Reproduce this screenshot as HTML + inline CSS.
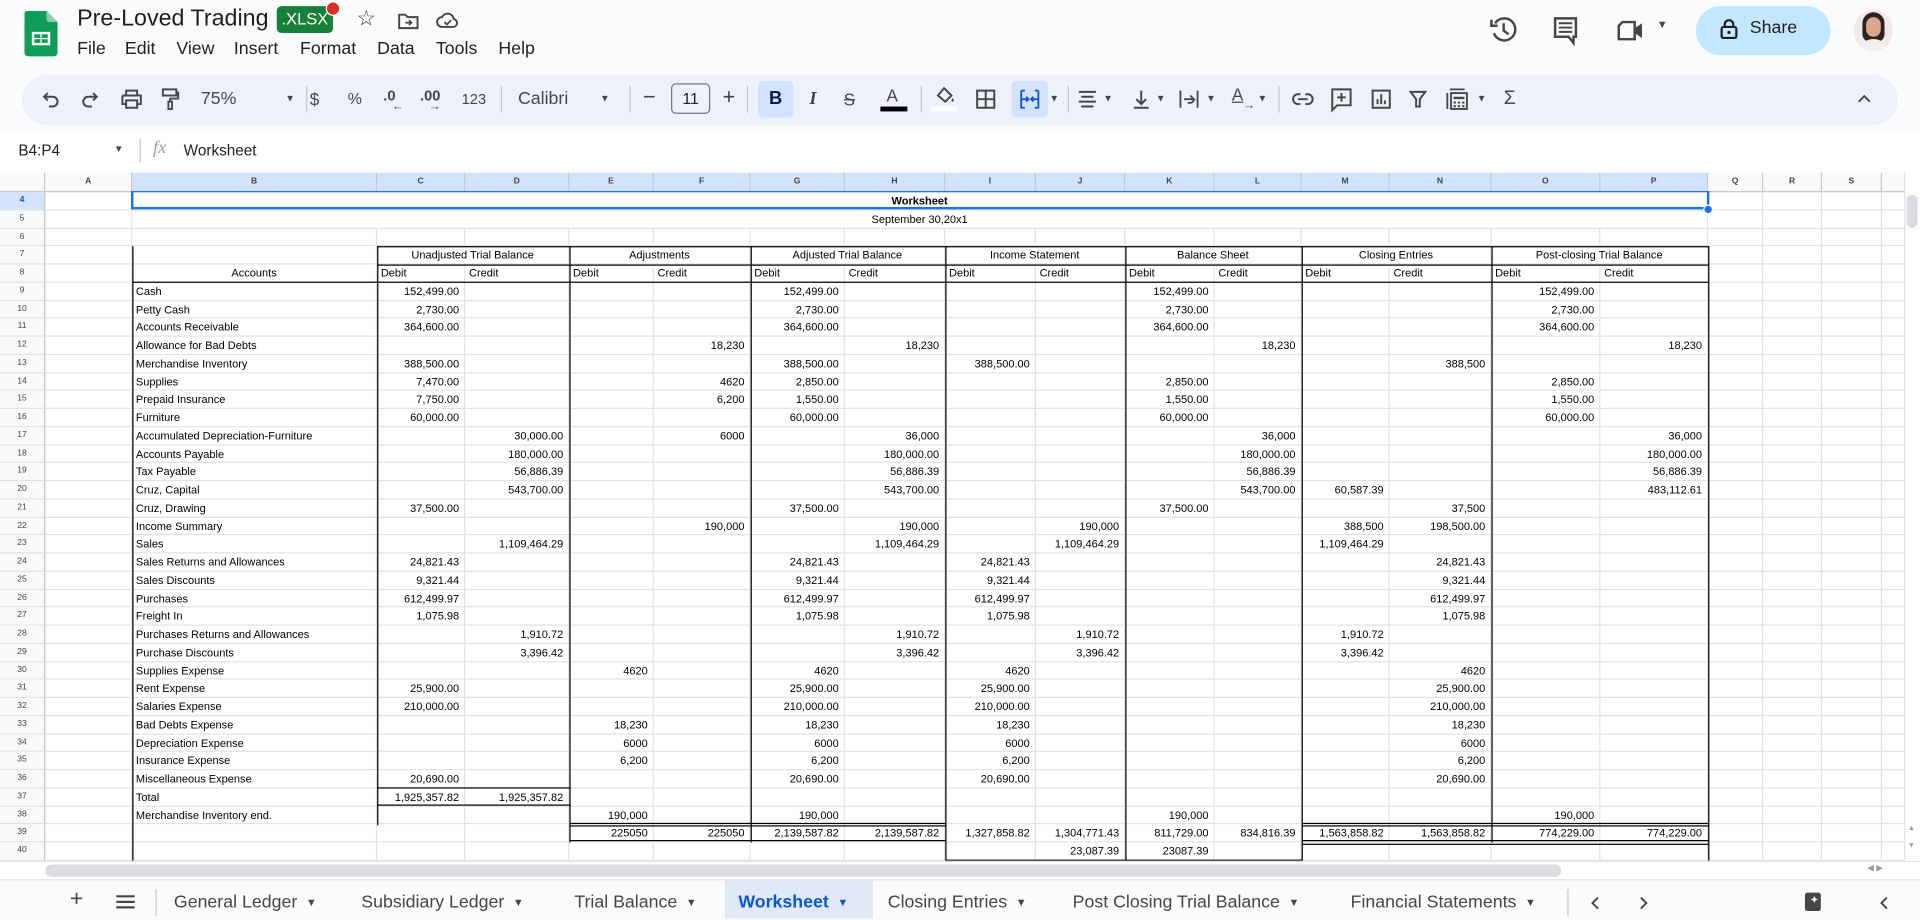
<!DOCTYPE html>
<html><head><meta charset="utf-8">
<style>
html,body{margin:0;padding:0;overflow:hidden;background:#f9fbfd;width:1920px;height:918px}
#w{position:absolute;left:0;top:0;width:1568px;height:750px;transform:scale(1.22449);transform-origin:0 0;font-family:"Liberation Sans",sans-serif;background:#f9fbfd;color:#1f1f1f}
.ab{position:absolute}
.menu span{position:absolute;top:32px;font-size:14.5px;color:#1f1f1f}
.tb{position:absolute;left:18px;top:61px;width:1532px;height:41px;background:#edf2fa;border-radius:21px}
.ti{position:absolute;top:71px;font-size:13px;color:#444746;line-height:20px}
.sep{position:absolute;top:70px;width:1px;height:22px;background:#c7c7c7}
.dd{position:absolute;top:72px;font-size:8px;color:#444746;line-height:18px}
svg{position:absolute;overflow:visible}
#g{position:absolute;left:0;top:141px;width:1556px;background:#fff}
.r{display:flex;height:14.75px;box-sizing:border-box}
.r c{display:block;flex:none;box-sizing:border-box;border-right:1px solid #e2e2e2;border-bottom:1px solid #e2e2e2;font-size:9px;line-height:14px;text-align:right;padding-right:4px;white-space:nowrap;overflow:visible;color:#000}
.r c:nth-child(1){width:37px;background:#f8f9fa;border-right:1px solid #c4c7c5;font-size:7px;color:#444;text-align:center;padding:0}
.r c:nth-child(2){width:71px}.r c:nth-child(3){width:200px;text-align:left;padding-left:3px}
.r c:nth-child(4){width:72px}.r c:nth-child(5){width:85px}.r c:nth-child(6){width:69px}.r c:nth-child(7){width:79px}
.r c:nth-child(8){width:77px}.r c:nth-child(9){width:82px}.r c:nth-child(10){width:74px}.r c:nth-child(11){width:73px}
.r c:nth-child(12){width:73px}.r c:nth-child(13){width:71px}.r c:nth-child(14){width:72px}.r c:nth-child(15){width:83px}
.r c:nth-child(16){width:89px}.r c:nth-child(17){width:88px}.r c:nth-child(18){width:45px}.r c:nth-child(19){width:48px}
.r c:nth-child(20){width:49px}.r c:nth-child(21){width:19px;border-right:none}
.hd{height:16px}
.hd c{background:#f8f9fa;border-bottom:1px solid #c4c7c5!important;border-right:1px solid #c4c7c5!important;font-size:7px!important;text-align:center!important;line-height:16px!important;padding:0!important;color:#444!important;font-weight:bold}
.hd c.s{background:#d3e3fd}
.L{text-align:left!important;padding-left:3px!important}
.C{text-align:center!important;padding:0!important}
.k{position:absolute;background:#000}
.tab{position:absolute;top:726px;font-size:14.5px;color:#444746;line-height:22px;white-space:nowrap}
.tab i{font-style:normal;font-size:9px;margin-left:7px;vertical-align:1px}
</style></head><body><div id="w">

<svg style="left:20px;top:9px" width="27" height="37" viewBox="0 0 27 37"><path d="M2 0h16l9 9v25a3 3 0 0 1-3 3H3a3 3 0 0 1-3-3V2a2 2 0 0 1 2-2z" fill="#0f9d58"/><path d="M18 0v7a2 2 0 0 0 2 2h7z" fill="#87ceac"/><rect x="6" y="17" width="15" height="11" fill="#fff"/><rect x="8" y="19" width="5" height="3" fill="#0f9d58"/><rect x="14" y="19" width="5" height="3" fill="#0f9d58"/><rect x="8" y="23" width="5" height="3" fill="#0f9d58"/><rect x="14" y="23" width="5" height="3" fill="#0f9d58"/></svg>
<div class="ab" style="left:63px;top:5px;font-size:19px;color:#1f1f1f">Pre-Loved Trading</div>
<div class="ab" style="left:226px;top:5px;width:46px;height:22px;background:#188038;border-radius:4px;color:#fff;font-size:13.5px;line-height:22px;text-align:center">.XLSX</div>
<div class="ab" style="left:266px;top:1px;width:10px;height:10px;border-radius:50%;background:#d93025;border:1px solid #fff"></div>
<div class="ab" style="left:291px;top:5px;font-size:18px;color:#444746">☆</div>
<svg style="left:325px;top:10px" width="17" height="14"><path d="M1 2h5l2 2h8v9H1z" fill="none" stroke="#444746" stroke-width="1.6"/><path d="M6 8.5h5M9 6.5l2 2-2 2" fill="none" stroke="#444746" stroke-width="1.4"/></svg>
<svg style="left:356px;top:9px" width="19" height="15"><path d="M5 13a4 4 0 0 1 0-8 5 5 0 0 1 9.5 1.5A3.3 3.3 0 0 1 14.5 13z" fill="none" stroke="#444746" stroke-width="1.6"/><path d="M7 9l2 2 3.5-3.5" fill="none" stroke="#444746" stroke-width="1.4"/></svg>
<div class="menu"><span style="left:63px">File</span><span style="left:102px">Edit</span><span style="left:144px">View</span><span style="left:191px">Insert</span><span style="left:245px">Format</span><span style="left:308px">Data</span><span style="left:356px">Tools</span><span style="left:407px">Help</span></div>

<svg style="left:1217px;top:13px" width="22" height="22"><path d="M4 6A9 9 0 1 1 3 14" fill="none" stroke="#444746" stroke-width="2"/><path d="M1 3v5h5" fill="none" stroke="#444746" stroke-width="2"/><path d="M11 6v6l4 3" fill="none" stroke="#444746" stroke-width="2"/></svg>
<svg style="left:1268px;top:14px" width="21" height="22"><path d="M2 1h17v15h-2v5l-4-5H2z" fill="none" stroke="#444746" stroke-width="2"/><path d="M5 5h11M5 8.5h11M5 12h11" stroke="#444746" stroke-width="1.6"/></svg>
<svg style="left:1321px;top:17px" width="22" height="16"><path d="M4 1h10v14H1V4z" fill="none" stroke="#444746" stroke-width="2"/><path d="M14 6l6-4v12l-6-4z" fill="#444746"/></svg>
<div class="ab" style="left:1353px;top:15px;font-size:9px;color:#444746">▼</div>
<div class="ab" style="left:1385px;top:5px;width:110px;height:40px;border-radius:20px;background:#c2e7ff"></div>
<svg style="left:1405px;top:15px" width="14" height="17"><rect x="1" y="7" width="12" height="9" rx="1.5" fill="none" stroke="#1f1f1f" stroke-width="1.8"/><path d="M3.5 7V5a3.5 3.5 0 0 1 7 0v2" fill="none" stroke="#1f1f1f" stroke-width="1.8"/><circle cx="7" cy="11.5" r="1.3" fill="#1f1f1f"/></svg>
<div class="ab" style="left:1429px;top:15px;font-size:14.5px;color:#1f1f1f">Share</div>
<div class="ab" style="left:1514px;top:8px;width:32px;height:34px;border-radius:50%;background:#f3e9e6;overflow:hidden"><div style="position:absolute;left:7px;top:2px;width:18px;height:24px;border-radius:9px 9px 6px 6px;background:#2a2220"></div><div style="position:absolute;left:10px;top:6px;width:12px;height:16px;border-radius:6px;background:#d9a58d"></div><div style="position:absolute;left:5px;top:24px;width:22px;height:12px;border-radius:10px 10px 0 0;background:#f5eeee"></div></div>

<div class="tb"></div>
<svg style="left:35px;top:74px" width="14" height="14"><path d="M4 2L1 5l3 3" fill="none" stroke="#444746" stroke-width="1.6"/><path d="M1 5h7a4 4 0 0 1 0 8H5" fill="none" stroke="#444746" stroke-width="1.6"/></svg>
<svg style="left:66px;top:74px" width="14" height="14"><path d="M10 2l3 3-3 3" fill="none" stroke="#444746" stroke-width="1.6"/><path d="M13 5H6a4 4 0 0 0 0 8h3" fill="none" stroke="#444746" stroke-width="1.6"/></svg>
<svg style="left:99px;top:73px" width="17" height="16"><path d="M4 1h9v4H4z" fill="none" stroke="#444746" stroke-width="1.6"/><path d="M1 5h15v7h-3M4 12H1V5" fill="none" stroke="#444746" stroke-width="1.6"/><path d="M4 9h9v6H4z" fill="none" stroke="#444746" stroke-width="1.6"/></svg>
<svg style="left:132px;top:72px" width="14" height="18"><rect x="1" y="1" width="11" height="5" fill="none" stroke="#444746" stroke-width="1.6"/><path d="M12 3.5h1.5v5H7v3" fill="none" stroke="#444746" stroke-width="1.6"/><rect x="5.5" y="11" width="3" height="6" fill="none" stroke="#444746" stroke-width="1.5"/></svg>
<div class="ti" style="left:164px;font-size:14.5px">75%</div><div class="dd" style="left:233px">▼</div>
<div class="sep" style="left:250px"></div>
<div class="ti" style="left:253px;font-size:14px">$</div>
<div class="ti" style="left:284px;font-size:13px">%</div>
<div class="ti" style="left:313px;font-size:12px;font-weight:bold;top:68px">.0</div><div class="ti" style="left:320px;top:78px;font-size:10px">←</div>
<div class="ti" style="left:343px;font-size:12px;font-weight:bold;top:68px">.00</div><div class="ti" style="left:350px;top:78px;font-size:10px">→</div>
<div class="ti" style="left:377px;font-size:12px">123</div>
<div class="sep" style="left:409px"></div>
<div class="ti" style="left:423px;font-size:14.5px">Calibri</div><div class="dd" style="left:490px">▼</div>
<div class="sep" style="left:514px"></div>
<div class="ti" style="left:525px;font-size:18px;top:69px">−</div>
<div class="ab" style="left:548px;top:68px;width:32px;height:25px;border:1px solid #747775;border-radius:4px;box-sizing:border-box;font-size:13px;text-align:center;line-height:23px;color:#1f1f1f">11</div>
<div class="ti" style="left:590px;font-size:18px;top:69px">+</div>
<div class="sep" style="left:610px"></div>
<div class="ab" style="left:619px;top:66px;width:29px;height:30px;background:#d3e3fd;border-radius:4px"></div>
<div class="ti" style="left:628px;font-size:15px;font-weight:bold;color:#041e49">B</div>
<div class="ti" style="left:661px;font-size:15px;font-style:italic;font-family:'Liberation Serif',serif;font-weight:bold">I</div>
<div class="ti" style="left:689px;font-size:14px;text-decoration:line-through">S</div>
<div class="ti" style="left:724px;font-size:14px;top:68px">A</div><div class="ab" style="left:719px;top:87px;width:22px;height:4px;background:#000"></div>
<div class="sep" style="left:752px"></div>
<svg style="left:763px;top:70px" width="18" height="16"><path d="M3 8l5-6 6 6-5 5z" fill="none" stroke="#444746" stroke-width="1.6"/><path d="M15 10c1 1.5 1.5 2.5 0 3s-1-1.5 0-3z" fill="#444746"/></svg><div class="ab" style="left:760px;top:87px;width:22px;height:4px;background:#fff"></div>
<svg style="left:797px;top:73px" width="16" height="16"><rect x="1" y="1" width="14" height="14" fill="none" stroke="#444746" stroke-width="1.6"/><path d="M8 1v14M1 8h14" stroke="#444746" stroke-width="1.6"/></svg>
<div class="ab" style="left:826px;top:66px;width:30px;height:30px;background:#d3e3fd;border-radius:4px"></div>
<svg style="left:833px;top:73px" width="16" height="16"><path d="M1 1h3M1 1v14h3M15 1h-3M15 1v14h-3M1 8h5M15 8h-5M5 6l2 2-2 2M11 6l-2 2 2 2" fill="none" stroke="#0b57d0" stroke-width="1.5"/></svg>
<div class="dd" style="left:857px">▼</div>
<div class="sep" style="left:872px"></div>
<svg style="left:880px;top:74px" width="16" height="14"><path d="M1 1h14M3 5h10M1 9h14M3 13h10" stroke="#444746" stroke-width="1.6"/></svg><div class="dd" style="left:901px">▼</div>
<svg style="left:925px;top:73px" width="14" height="16"><path d="M7 1v11M3 8l4 4 4-4M1 15h12" fill="none" stroke="#444746" stroke-width="1.6"/></svg><div class="dd" style="left:944px">▼</div>
<svg style="left:963px;top:73px" width="16" height="16"><path d="M1 1v14M15 1v14M4 8h8l-3-3M12 8a3 3 0 0 1-3 3H7" fill="none" stroke="#444746" stroke-width="1.5"/></svg><div class="dd" style="left:985px">▼</div>
<div class="ti" style="left:1006px;font-size:14px;top:67px;text-decoration:underline">A</div><div class="ti" style="left:1015px;font-size:10px;top:77px">→</div><div class="dd" style="left:1027px">▼</div>
<div class="sep" style="left:1044px"></div>
<svg style="left:1055px;top:76px" width="18" height="10"><path d="M7 1H5a4 4 0 0 0 0 8h2M11 1h2a4 4 0 0 1 0 8h-2M5 5h8" fill="none" stroke="#444746" stroke-width="1.6"/></svg>
<svg style="left:1087px;top:72px" width="17" height="18"><path d="M1 1h15v13H5l-4 4z" fill="none" stroke="#444746" stroke-width="1.6"/><path d="M8.5 4v7M5 7.5h7" stroke="#444746" stroke-width="1.6"/></svg>
<svg style="left:1120px;top:73px" width="16" height="16"><rect x="1" y="1" width="14" height="14" fill="none" stroke="#444746" stroke-width="1.6"/><path d="M5 12V8M8 12V4M11 12V9" stroke="#444746" stroke-width="1.6"/></svg>
<svg style="left:1151px;top:74px" width="14" height="14"><path d="M1 1h12L8.5 7v6h-3V7z" fill="none" stroke="#444746" stroke-width="1.6"/></svg>
<svg style="left:1181px;top:72px" width="18" height="18"><path d="M3 1h12M1 4v13M4 4h13v13H4z" fill="none" stroke="#444746" stroke-width="1.5"/><path d="M6 7h9v2H6zM6 11h2v1.5H6zM9.5 11h2v1.5h-2zM13 11h2v1.5h-2zM6 14h2v1.5H6zM9.5 14h2v1.5h-2zM13 14h2v1.5h-2z" fill="#444746"/></svg><div class="dd" style="left:1206px">▼</div>
<div class="ti" style="left:1228px;font-size:16px">Σ</div>
<svg style="left:1517px;top:77px" width="11" height="7"><path d="M1 6l4.5-4.5L10 6" fill="none" stroke="#444746" stroke-width="1.6"/></svg>

<div class="ab" style="left:0;top:106px;width:1568px;height:35px;background:#fff"></div>
<div class="ab" style="left:15px;top:116px;font-size:12.5px;color:#1f1f1f">B4:P4</div>
<div class="ab" style="left:93px;top:117px;font-size:8px;color:#444746">▼</div>
<div class="ab" style="left:114px;top:113px;width:1px;height:20px;background:#c7c7c7"></div>
<div class="ab" style="left:125px;top:113px;font-size:15px;font-style:italic;font-family:'Liberation Serif',serif;color:#9aa0a6">fx</div>
<div class="ab" style="left:150px;top:116px;font-size:12.5px;color:#1f1f1f">Worksheet</div>

<div id="g">
<div class="r hd"><c></c><c>A</c><c class="s">B</c><c class="s">C</c><c class="s">D</c><c class="s">E</c><c class="s">F</c><c class="s">G</c><c class="s">H</c><c class="s">I</c><c class="s">J</c><c class="s">K</c><c class="s">L</c><c class="s">M</c><c class="s">N</c><c class="s">O</c><c class="s">P</c><c>Q</c><c>R</c><c>S</c><c></c></div>
<div class="r"><c style="width:37px;background:#d3e3fd;font-weight:bold;color:#0b57d0">4</c><c style="width:71px"></c><c class="C" style="width:1287px;font-weight:bold">Worksheet</c><c style="width:45px"></c><c style="width:48px"></c><c style="width:49px"></c><c style="width:19px;border-right:none"></c></div>
<div class="r"><c style="width:37px">5</c><c style="width:71px"></c><c class="C" style="width:1287px">September 30,20x1</c><c style="width:45px"></c><c style="width:48px"></c><c style="width:49px"></c><c style="width:19px;border-right:none"></c></div>
<div class="r"><c>6</c><c></c><c></c><c></c><c></c><c></c><c></c><c></c><c></c><c></c><c></c><c></c><c></c><c></c><c></c><c></c><c></c><c></c><c></c><c></c><c></c></div>
<div class="r"><c style="width:37px">7</c><c style="width:71px"></c><c style="width:200px"></c><c class="C" style="width:157px">Unadjusted Trial Balance</c><c class="C" style="width:148px">Adjustments</c><c class="C" style="width:159px">Adjusted Trial Balance</c><c class="C" style="width:147px">Income Statement</c><c class="C" style="width:144px">Balance Sheet</c><c class="C" style="width:155px">Closing Entries</c><c class="C" style="width:177px">Post-closing Trial Balance</c><c style="width:45px"></c><c style="width:48px"></c><c style="width:49px"></c><c style="width:19px;border-right:none"></c></div>
<div class="r"><c>8</c><c></c><c class="C">Accounts</c><c class="L">Debit</c><c class="L">Credit</c><c class="L">Debit</c><c class="L">Credit</c><c class="L">Debit</c><c class="L">Credit</c><c class="L">Debit</c><c class="L">Credit</c><c class="L">Debit</c><c class="L">Credit</c><c class="L">Debit</c><c class="L">Credit</c><c class="L">Debit</c><c class="L">Credit</c><c></c><c></c><c></c><c></c></div>
<div class="r"><c>9</c><c></c><c>Cash</c><c>152,499.00</c><c></c><c></c><c></c><c>152,499.00</c><c></c><c></c><c></c><c>152,499.00</c><c></c><c></c><c></c><c>152,499.00</c><c></c><c></c><c></c><c></c><c></c></div>
<div class="r"><c>10</c><c></c><c>Petty Cash</c><c>2,730.00</c><c></c><c></c><c></c><c>2,730.00</c><c></c><c></c><c></c><c>2,730.00</c><c></c><c></c><c></c><c>2,730.00</c><c></c><c></c><c></c><c></c><c></c></div>
<div class="r"><c>11</c><c></c><c>Accounts Receivable</c><c>364,600.00</c><c></c><c></c><c></c><c>364,600.00</c><c></c><c></c><c></c><c>364,600.00</c><c></c><c></c><c></c><c>364,600.00</c><c></c><c></c><c></c><c></c><c></c></div>
<div class="r"><c>12</c><c></c><c>Allowance for Bad Debts</c><c></c><c></c><c></c><c>18,230</c><c></c><c>18,230</c><c></c><c></c><c></c><c>18,230</c><c></c><c></c><c></c><c>18,230</c><c></c><c></c><c></c><c></c></div>
<div class="r"><c>13</c><c></c><c>Merchandise Inventory</c><c>388,500.00</c><c></c><c></c><c></c><c>388,500.00</c><c></c><c>388,500.00</c><c></c><c></c><c></c><c></c><c>388,500</c><c></c><c></c><c></c><c></c><c></c><c></c></div>
<div class="r"><c>14</c><c></c><c>Supplies</c><c>7,470.00</c><c></c><c></c><c>4620</c><c>2,850.00</c><c></c><c></c><c></c><c>2,850.00</c><c></c><c></c><c></c><c>2,850.00</c><c></c><c></c><c></c><c></c><c></c></div>
<div class="r"><c>15</c><c></c><c>Prepaid Insurance</c><c>7,750.00</c><c></c><c></c><c>6,200</c><c>1,550.00</c><c></c><c></c><c></c><c>1,550.00</c><c></c><c></c><c></c><c>1,550.00</c><c></c><c></c><c></c><c></c><c></c></div>
<div class="r"><c>16</c><c></c><c>Furniture</c><c>60,000.00</c><c></c><c></c><c></c><c>60,000.00</c><c></c><c></c><c></c><c>60,000.00</c><c></c><c></c><c></c><c>60,000.00</c><c></c><c></c><c></c><c></c><c></c></div>
<div class="r"><c>17</c><c></c><c>Accumulated Depreciation-Furniture</c><c></c><c>30,000.00</c><c></c><c>6000</c><c></c><c>36,000</c><c></c><c></c><c></c><c>36,000</c><c></c><c></c><c></c><c>36,000</c><c></c><c></c><c></c><c></c></div>
<div class="r"><c>18</c><c></c><c>Accounts Payable</c><c></c><c>180,000.00</c><c></c><c></c><c></c><c>180,000.00</c><c></c><c></c><c></c><c>180,000.00</c><c></c><c></c><c></c><c>180,000.00</c><c></c><c></c><c></c><c></c></div>
<div class="r"><c>19</c><c></c><c>Tax Payable</c><c></c><c>56,886.39</c><c></c><c></c><c></c><c>56,886.39</c><c></c><c></c><c></c><c>56,886.39</c><c></c><c></c><c></c><c>56,886.39</c><c></c><c></c><c></c><c></c></div>
<div class="r"><c>20</c><c></c><c>Cruz, Capital</c><c></c><c>543,700.00</c><c></c><c></c><c></c><c>543,700.00</c><c></c><c></c><c></c><c>543,700.00</c><c>60,587.39</c><c></c><c></c><c>483,112.61</c><c></c><c></c><c></c><c></c></div>
<div class="r"><c>21</c><c></c><c>Cruz, Drawing</c><c>37,500.00</c><c></c><c></c><c></c><c>37,500.00</c><c></c><c></c><c></c><c>37,500.00</c><c></c><c></c><c>37,500</c><c></c><c></c><c></c><c></c><c></c><c></c></div>
<div class="r"><c>22</c><c></c><c>Income Summary</c><c></c><c></c><c></c><c>190,000</c><c></c><c>190,000</c><c></c><c>190,000</c><c></c><c></c><c>388,500</c><c>198,500.00</c><c></c><c></c><c></c><c></c><c></c><c></c></div>
<div class="r"><c>23</c><c></c><c>Sales</c><c></c><c>1,109,464.29</c><c></c><c></c><c></c><c>1,109,464.29</c><c></c><c>1,109,464.29</c><c></c><c></c><c>1,109,464.29</c><c></c><c></c><c></c><c></c><c></c><c></c><c></c></div>
<div class="r"><c>24</c><c></c><c>Sales Returns and Allowances</c><c>24,821.43</c><c></c><c></c><c></c><c>24,821.43</c><c></c><c>24,821.43</c><c></c><c></c><c></c><c></c><c>24,821.43</c><c></c><c></c><c></c><c></c><c></c><c></c></div>
<div class="r"><c>25</c><c></c><c>Sales Discounts</c><c>9,321.44</c><c></c><c></c><c></c><c>9,321.44</c><c></c><c>9,321.44</c><c></c><c></c><c></c><c></c><c>9,321.44</c><c></c><c></c><c></c><c></c><c></c><c></c></div>
<div class="r"><c>26</c><c></c><c>Purchases</c><c>612,499.97</c><c></c><c></c><c></c><c>612,499.97</c><c></c><c>612,499.97</c><c></c><c></c><c></c><c></c><c>612,499.97</c><c></c><c></c><c></c><c></c><c></c><c></c></div>
<div class="r"><c>27</c><c></c><c>Freight In</c><c>1,075.98</c><c></c><c></c><c></c><c>1,075.98</c><c></c><c>1,075.98</c><c></c><c></c><c></c><c></c><c>1,075.98</c><c></c><c></c><c></c><c></c><c></c><c></c></div>
<div class="r"><c>28</c><c></c><c>Purchases Returns and Allowances</c><c></c><c>1,910.72</c><c></c><c></c><c></c><c>1,910.72</c><c></c><c>1,910.72</c><c></c><c></c><c>1,910.72</c><c></c><c></c><c></c><c></c><c></c><c></c><c></c></div>
<div class="r"><c>29</c><c></c><c>Purchase Discounts</c><c></c><c>3,396.42</c><c></c><c></c><c></c><c>3,396.42</c><c></c><c>3,396.42</c><c></c><c></c><c>3,396.42</c><c></c><c></c><c></c><c></c><c></c><c></c><c></c></div>
<div class="r"><c>30</c><c></c><c>Supplies Expense</c><c></c><c></c><c>4620</c><c></c><c>4620</c><c></c><c>4620</c><c></c><c></c><c></c><c></c><c>4620</c><c></c><c></c><c></c><c></c><c></c><c></c></div>
<div class="r"><c>31</c><c></c><c>Rent Expense</c><c>25,900.00</c><c></c><c></c><c></c><c>25,900.00</c><c></c><c>25,900.00</c><c></c><c></c><c></c><c></c><c>25,900.00</c><c></c><c></c><c></c><c></c><c></c><c></c></div>
<div class="r"><c>32</c><c></c><c>Salaries Expense</c><c>210,000.00</c><c></c><c></c><c></c><c>210,000.00</c><c></c><c>210,000.00</c><c></c><c></c><c></c><c></c><c>210,000.00</c><c></c><c></c><c></c><c></c><c></c><c></c></div>
<div class="r"><c>33</c><c></c><c>Bad Debts Expense</c><c></c><c></c><c>18,230</c><c></c><c>18,230</c><c></c><c>18,230</c><c></c><c></c><c></c><c></c><c>18,230</c><c></c><c></c><c></c><c></c><c></c><c></c></div>
<div class="r"><c>34</c><c></c><c>Depreciation Expense</c><c></c><c></c><c>6000</c><c></c><c>6000</c><c></c><c>6000</c><c></c><c></c><c></c><c></c><c>6000</c><c></c><c></c><c></c><c></c><c></c><c></c></div>
<div class="r"><c>35</c><c></c><c>Insurance Expense</c><c></c><c></c><c>6,200</c><c></c><c>6,200</c><c></c><c>6,200</c><c></c><c></c><c></c><c></c><c>6,200</c><c></c><c></c><c></c><c></c><c></c><c></c></div>
<div class="r"><c>36</c><c></c><c>Miscellaneous Expense</c><c>20,690.00</c><c></c><c></c><c></c><c>20,690.00</c><c></c><c>20,690.00</c><c></c><c></c><c></c><c></c><c>20,690.00</c><c></c><c></c><c></c><c></c><c></c><c></c></div>
<div class="r"><c>37</c><c></c><c>Total</c><c>1,925,357.82</c><c>1,925,357.82</c><c></c><c></c><c></c><c></c><c></c><c></c><c></c><c></c><c></c><c></c><c></c><c></c><c></c><c></c><c></c><c></c></div>
<div class="r"><c>38</c><c></c><c>Merchandise Inventory end.</c><c></c><c></c><c>190,000</c><c></c><c>190,000</c><c></c><c></c><c></c><c>190,000</c><c></c><c></c><c></c><c>190,000</c><c></c><c></c><c></c><c></c><c></c></div>
<div class="r"><c>39</c><c></c><c></c><c></c><c></c><c>225050</c><c>225050</c><c>2,139,587.82</c><c>2,139,587.82</c><c>1,327,858.82</c><c>1,304,771.43</c><c>811,729.00</c><c>834,816.39</c><c>1,563,858.82</c><c>1,563,858.82</c><c>774,229.00</c><c>774,229.00</c><c></c><c></c><c></c><c></c></div>
<div class="r"><c>40</c><c></c><c></c><c></c><c></c><c></c><c></c><c></c><c></c><c></c><c>23,087.39</c><c>23087.39</c><c></c><c></c><c></c><c></c><c></c><c></c><c></c><c></c><c></c></div>
</div>

<div class="k" style="left:108px;top:201px;width:1px;height:503px"></div>
<div class="k" style="left:308px;top:201px;width:1px;height:473px"></div>
<div class="k" style="left:465px;top:201px;width:1px;height:487px"></div>
<div class="k" style="left:613px;top:201px;width:1px;height:487px"></div>
<div class="k" style="left:772px;top:201px;width:1px;height:503px"></div>
<div class="k" style="left:919px;top:201px;width:1px;height:503px"></div>
<div class="k" style="left:1063px;top:201px;width:1px;height:503px"></div>
<div class="k" style="left:1218px;top:201px;width:1px;height:487px"></div>
<div class="k" style="left:1395px;top:201px;width:1px;height:503px"></div>
<div class="k" style="left:308px;top:201px;width:1088px;height:1px"></div>
<div class="k" style="left:308px;top:216px;width:1088px;height:1px"></div>
<div class="k" style="left:108px;top:230px;width:1288px;height:1px"></div>
<div class="k" style="left:308px;top:643px;width:158px;height:1px"></div>
<div class="k" style="left:308px;top:657px;width:158px;height:1px"></div>
<div class="k" style="left:465px;top:672px;width:308px;height:1px"></div>
<div class="k" style="left:465px;top:674px;width:308px;height:1px"></div>
<div class="k" style="left:1063px;top:672px;width:333px;height:1px"></div>
<div class="k" style="left:1063px;top:674px;width:333px;height:1px"></div>
<div class="k" style="left:465px;top:686px;width:308px;height:1px"></div>
<div class="k" style="left:1063px;top:686px;width:333px;height:1px"></div>
<div class="k" style="left:1063px;top:689px;width:333px;height:1px"></div>
<div class="k" style="left:772px;top:702px;width:291px;height:1px"></div>
<div class="ab" style="left:107px;top:156px;width:1289px;height:15px;border:2px solid #1a73e8;border-top-width:1px;box-sizing:border-box"></div>
<div class="ab" style="left:1391px;top:167px;width:8px;height:8px;border-radius:50%;background:#1a73e8;border:1px solid #fff;box-sizing:border-box"></div>

<div class="ab" style="left:1555px;top:141px;width:13px;height:564px;background:#fff;border-left:1px solid #e2e2e2"></div>
<div class="ab" style="left:1557px;top:159px;width:9px;height:27px;border-radius:5px;background:#dadce0"></div>
<div class="ab" style="left:1558px;top:674px;font-size:6px;color:#999">▲</div>
<div class="ab" style="left:1558px;top:688px;font-size:6px;color:#999">▼</div>
<div class="ab" style="left:0;top:703px;width:1568px;height:15px;background:#fff;border-top:1px solid #e2e2e2"></div>
<div class="ab" style="left:37px;top:706px;width:1238px;height:10px;border-radius:5px;background:#dadce0"></div>
<div class="ab" style="left:1525px;top:705px;font-size:7px;color:#999">◀ ▶</div>

<div class="ab" style="left:0;top:718px;width:1568px;height:32px;background:#f9fbfd;border-top:1px solid #e2e2e2"></div>
<div class="ab" style="left:592px;top:719px;width:121px;height:31px;background:#e1e9f7"></div>
<div class="tab" style="left:57px;font-size:19px;top:724px">+</div>
<svg style="left:95px;top:731px" width="15" height="11"><path d="M0 1h15M0 5.5h15M0 10h15" stroke="#444746" stroke-width="1.8"/></svg>
<div class="ab" style="left:127px;top:726px;width:1px;height:22px;background:#c7c7c7"></div>
<div class="tab" style="left:142px">General Ledger<i>▼</i></div>
<div class="tab" style="left:295px">Subsidiary Ledger<i>▼</i></div>
<div class="tab" style="left:469px">Trial Balance<i>▼</i></div>
<div class="tab" style="left:603px;color:#0b57d0;font-weight:bold">Worksheet<i>▼</i></div>
<div class="tab" style="left:725px">Closing Entries<i>▼</i></div>
<div class="tab" style="left:876px">Post Closing Trial Balance<i>▼</i></div>
<div class="tab" style="left:1103px">Financial Statements<i>▼</i></div>
<div class="ab" style="left:1280px;top:726px;width:1px;height:22px;background:#c7c7c7"></div>
<svg style="left:1299px;top:732px" width="7" height="11"><path d="M6 1L1.5 5.5 6 10" fill="none" stroke="#444746" stroke-width="1.6"/></svg>
<svg style="left:1339px;top:732px" width="7" height="11"><path d="M1 1l4.5 4.5L1 10" fill="none" stroke="#444746" stroke-width="1.6"/></svg>
<div class="ab" style="left:1474px;top:729px;width:13px;height:15px;border-radius:2px;background:#444746"></div>
<div class="ab" style="left:1478px;top:730px;color:#fff;font-size:9px">✦</div>
<svg style="left:1535px;top:732px" width="7" height="11"><path d="M6 1L1.5 5.5 6 10" fill="none" stroke="#444746" stroke-width="1.6"/></svg>
</div></body></html>
